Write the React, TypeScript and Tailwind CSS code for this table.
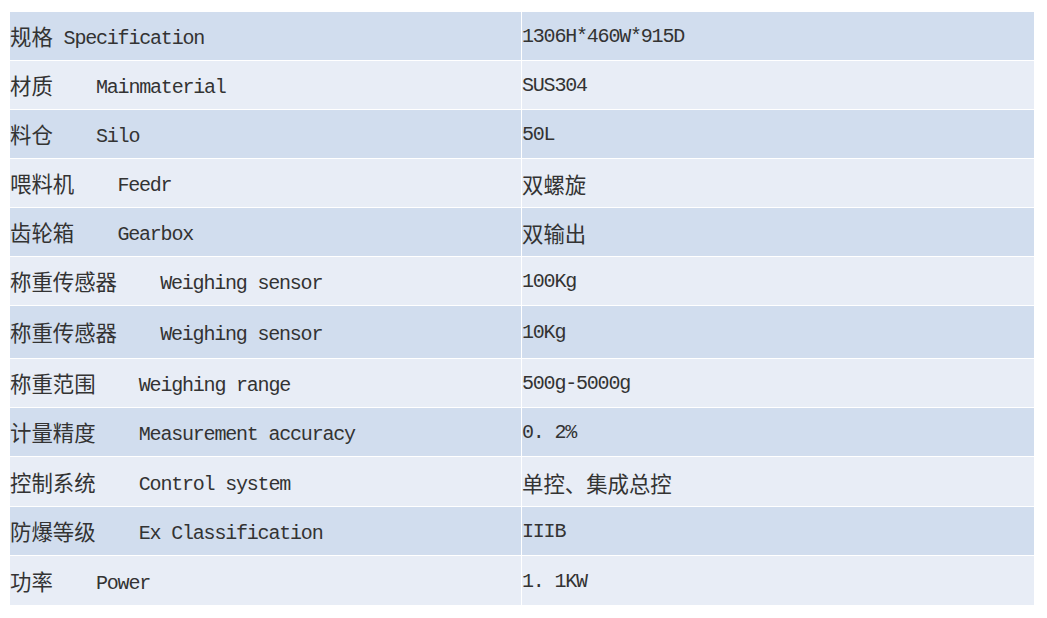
import React from 'react';

type Row = { zh: string; gap: string; en: string; value: string; h: string };

const rows: Row[] = [
  { zh: '规格', gap: ' ', en: 'Specification', value: '1306H*460W*915D', h: 'h-[49px]' },
  { zh: '材质', gap: '    ', en: 'Mainmaterial', value: 'SUS304', h: 'h-[49px]' },
  { zh: '料仓', gap: '    ', en: 'Silo', value: '50L', h: 'h-[49px]' },
  { zh: '喂料机', gap: '    ', en: 'Feedr', value: '双螺旋', h: 'h-[49px]' },
  { zh: '齿轮箱', gap: '    ', en: 'Gearbox', value: '双输出', h: 'h-[49px]' },
  { zh: '称重传感器', gap: '    ', en: 'Weighing sensor', value: '100Kg', h: 'h-[49px]' },
  { zh: '称重传感器', gap: '    ', en: 'Weighing sensor', value: '10Kg', h: 'h-[53px]' },
  { zh: '称重范围', gap: '    ', en: 'Weighing range', value: '500g-5000g', h: 'h-[49px]' },
  { zh: '计量精度', gap: '    ', en: 'Measurement accuracy', value: '0. 2%', h: 'h-[49px]' },
  { zh: '控制系统', gap: '    ', en: 'Control system', value: '单控、集成总控', h: 'h-[50px]' },
  { zh: '防爆等级', gap: '    ', en: 'Ex Classification', value: 'IIIB', h: 'h-[49px]' },
  { zh: '功率', gap: '    ', en: 'Power', value: '1. 1KW', h: 'h-[49px]' },
];

const cjk = "font-['Noto_Sans_CJK_SC',sans-serif] text-[21.4px]";
const mono =
  "font-['Liberation_Mono','Noto_Sans_CJK_SC',monospace] text-[20px] tracking-[-1.2px] align-[1px]";

// splits a string into cjk / latin runs so each gets its own width
function Mixed({ text }: { text: string }) {
  const parts = text.match(/[\u3000-\u9fff]+|[^\u3000-\u9fff]+/g) || [];
  return (
    <span className="leading-none">
      {parts.map((p, i) =>
        /[\u3000-\u9fff]/.test(p) ? (
          <span key={i} className={cjk}>{p}</span>
        ) : (
          <span key={i} className={mono}>{p}</span>
        )
      )}
    </span>
  );
}

export default function App() {
  return (
    <div className="bg-white w-[1047px] h-[618px] pt-[12px] pl-[10px] text-[#333333]">
      <div className="w-[1024px] flex flex-col">
        {rows.map((r, i) => (
          <div
            key={i}
            className={`flex ${r.h} ${i % 2 === 0 ? 'bg-[#d1ddee]' : 'bg-[#e8edf6]'} ${
              i < rows.length - 1 ? 'border-b border-white' : ''
            }`}
          >
            <div className="w-[511px] flex items-center whitespace-pre pt-[2px]">
              <span className="leading-none">
                <span className={cjk}>{r.zh}</span>
                <span className={mono}>{r.gap}{r.en}</span>
              </span>
            </div>
            <div className="w-px bg-white" />
            <div className="flex-1 flex items-center whitespace-pre pt-[2px]">
              <Mixed text={r.value} />
            </div>
          </div>
        ))}
      </div>
    </div>
  );
}
